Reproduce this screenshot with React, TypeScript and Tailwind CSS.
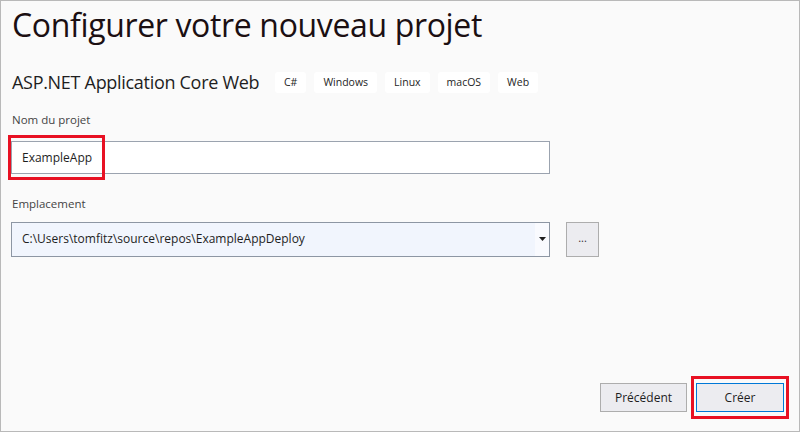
const tags = ['C#', 'Windows', 'Linux', 'macOS', 'Web'];

export default function App() {
  return (
    <div className="w-[800px] h-[432px] bg-[#fafafa] border border-[#b9b9b9] font-['Open_Sans',sans-serif] text-[#1e1e1e] flex flex-col overflow-hidden">
      {/* Header */}
      <h1 className="pl-[11px] pt-[2px] text-[32px] leading-[44px] text-[#1b0f12] tracking-[-0.35px]">
        Configurer votre nouveau projet
      </h1>

      <div className="flex items-center pl-[11px] mt-[24px] h-[22px]">
        <span className="text-[18px] text-[#1e1e1e] tracking-[-0.3px] w-[263px]">ASP.NET Application Core Web</span>
        <div className="flex gap-[8px]">
          {tags.map((t) => (
            <span key={t} className="h-[21px] px-[9px] rounded-[3px] bg-white text-[10.5px] leading-[21px] text-[#1e1e1e]">
              {t}
            </span>
          ))}
        </div>
      </div>

      {/* Project name */}
      <label className="pl-[11px] mt-[18px] text-[11.5px] text-[#444]">Nom du projet</label>
      <div className="relative ml-[10px] mt-[13px] w-[539px] h-[33px] border border-[#9ba3af] bg-white flex items-center pl-[10px] text-[12px]">
        ExampleApp
        <div className="absolute left-[-4px] top-[-7px] w-[97px] h-[45px] border-[3px] border-[#e81123]" />
      </div>

      {/* Location */}
      <label className="pl-[11px] mt-[21px] text-[11.5px] text-[#444]">Emplacement</label>
      <div className="flex items-center ml-[10px] mt-[9px] gap-[16px]">
        <div className="w-[539px] h-[35px] border border-[#8d96a3] bg-[#f1f5fd] flex items-center text-[12px]">
          <span className="flex-1 pl-[10px]">C:\Users\tomfitz\source\repos\ExampleAppDeploy</span>
          <span className="w-[14px] h-full bg-[#f9fafe] flex items-center justify-center">
            <svg width="7" height="4" viewBox="0 0 7 4"><path d="M0 0h7L3.5 4z" fill="#1e1e1e" /></svg>
          </span>
        </div>
        <button className="w-[33px] h-[35px] bg-[#ececf0] border border-[#adadad] text-[11px] leading-none pb-[4px] text-[#333]">
          ...
        </button>
      </div>

      {/* Footer buttons */}
      <div className="mt-auto mb-[19px] mr-[15px] flex justify-end gap-[9px]">
        <button className="w-[87px] h-[29px] bg-[#ececf0] border border-[#adadad] text-[12px] text-[#1e1e1e]">
          Précédent
        </button>
        <div className="relative">
          <button className="w-[88px] h-[29px] bg-[#ececf0] border border-[#0078d7] text-[12px] text-[#1e1e1e]">
            Créer
          </button>
          <div className="absolute left-[-5px] top-[-7px] w-[98px] h-[43px] border-[3px] border-[#e81123]" />
        </div>
      </div>
    </div>
  );
}
